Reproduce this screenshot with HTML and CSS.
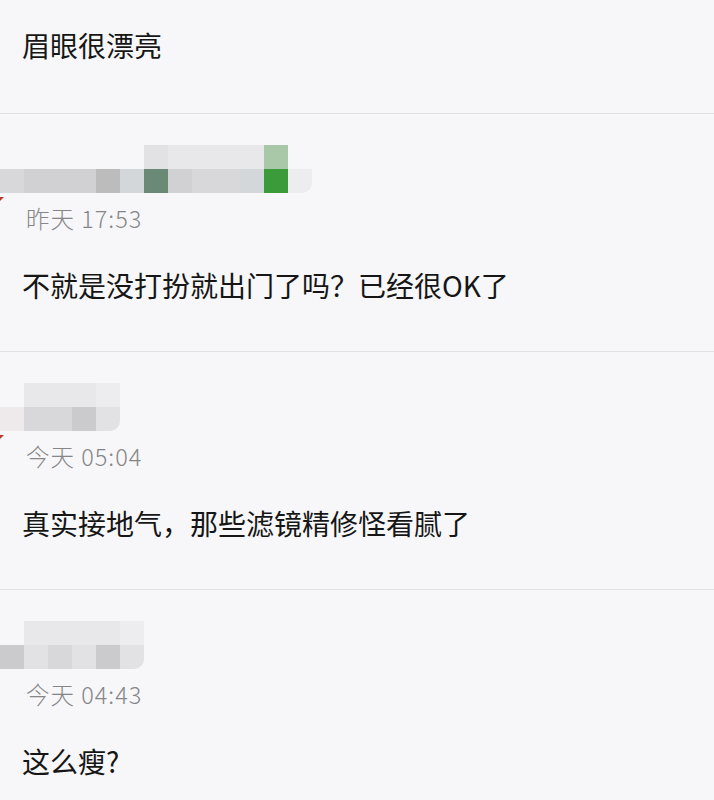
FILE: index.html
```html
<!DOCTYPE html>
<html lang="zh-CN">

<head>
   <meta charset="UTF-8">
   <meta name="viewport" content="width=device-width, initial-scale=1.0">
   <title>评论</title>
   <link rel="stylesheet" href="styles.css">
</head>

<body>

   <div class="comment first">
       <p class="text">眉眼很漂亮</p>
   </div>

   <div class="comment">
       <div class="mosaic mark wide">
           <span class="blank"></span><span class="blank"></span><span class="blank"></span><span class="blank"></span><span class="blank"></span><span class="blank"></span>
           <span class="s2"></span><span class="s1"></span><span class="s1"></span><span class="s1"></span><span class="s1"></span><span class="lg"></span><span class="blank"></span>
           <span class="s4"></span><span class="s5"></span><span class="s5"></span><span class="s5"></span><span class="s7"></span><span class="s4b"></span><span class="dg"></span><span class="s5"></span><span class="s4"></span><span class="s4"></span><span class="s4b"></span><span class="gr"></span><span class="s0 end"></span>
       </div>
       <div class="time">昨天 17:53</div>
       <p class="text">不就是没打扮就出门了吗？已经很OK了</p>
   </div>

   <div class="comment">
       <div class="mosaic mark narrow">
           <span class="blank"></span><span class="s1"></span><span class="s1"></span><span class="s1"></span><span class="s0"></span>
           <span class="pk"></span><span class="s4"></span><span class="s4"></span><span class="s6"></span><span class="s2 end"></span>
       </div>
       <div class="time">今天 05:04</div>
       <p class="text">真实接地气，那些滤镜精修怪看腻了</p>
   </div>

   <div class="comment">
       <div class="mosaic mid">
           <span class="blank"></span><span class="s1"></span><span class="s1"></span><span class="s1"></span><span class="s1"></span><span class="s0"></span>
           <span class="s6"></span><span class="s2"></span><span class="s4"></span><span class="s2"></span><span class="s6"></span><span class="s2 end"></span>
       </div>
       <div class="time">今天 04:43</div>
       <p class="text">这么瘦?</p>
   </div>

</body>

</html>
```

FILE: styles.css
```css
body {
    font-family: "Noto Sans CJK SC", "Noto Sans", sans-serif;
    margin: 0;
    background-color: #f7f7f9;
    color: #161616;
}

.comment {
    padding: 31px 0 48px;
    border-bottom: 1px solid #e2e2e5;
}

.comment.first {
    padding: 27px 0 50px;
}

.text {
    margin: 0;
    padding-left: 22px;
    font-size: 28px;
    line-height: 36px;
}

.time {
    margin: 10px 0 34px;
    padding-left: 26px;
    font-size: 23.5px;
    font-weight: 300;
    letter-spacing: 1px;
    line-height: 30px;
    color: #868688;
}

/* pixelated user name */
.mosaic {
    position: relative;
    display: grid;
    grid-auto-rows: 24px;
}

.mosaic.wide {
    grid-template-columns: repeat(13, 24px);
}

.mosaic.narrow {
    grid-template-columns: repeat(5, 24px);
}

.mosaic.mid {
    grid-template-columns: repeat(6, 24px);
}

.mosaic.mark::after {
    content: "";
    position: absolute;
    left: 0;
    top: 52px;
    border-top: 4px solid #c0392b;
    border-right: 4px solid transparent;
}

.end {
    border-bottom-right-radius: 10px;
}

.s0 { background-color: #ededef; }
.s1 { background-color: #e8e8ea; }
.s2 { background-color: #e2e2e4; }
.s4 { background-color: #d8d8da; }
.s4b { background-color: #d4d7da; }
.s5 { background-color: #d1d1d3; }
.s6 { background-color: #cbcbcd; }
.s7 { background-color: #bdbcbd; }
.lg { background-color: #a9c8a8; }
.dg { background-color: #6b8a76; }
.gr { background-color: #3b9b3b; }
.pk { background-color: #eee9ea; }
```
